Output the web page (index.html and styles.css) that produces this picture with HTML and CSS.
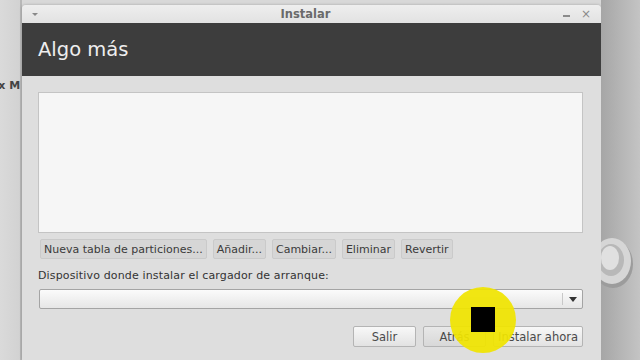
FILE: index.html
```html
<!DOCTYPE html>
<html lang="es">
<head>
<meta charset="utf-8">
<link rel="stylesheet" href="styles.css">
</head>
<body>
<div class="desktop">
  <div class="side-left"><span class="side-text">x Mi</span></div>
  <div class="window">
    <div class="titlebar">
      <span class="menu-arrow"></span>
      <span class="title">Instalar</span>
      <span class="win-btns"><span class="minimize"></span><span class="close">×</span></span>
    </div>
    <div class="header">Algo más</div>
    <div class="content">
      <div class="partitions"></div>
      <div class="part-buttons">
        <button class="btn">Nueva tabla de particiones...</button>
        <button class="btn">Añadir...</button>
        <button class="btn">Cambiar...</button>
        <button class="btn">Eliminar</button>
        <button class="btn">Revertir</button>
      </div>
      <div class="label">Dispositivo donde instalar el cargador de arranque:</div>
      <div class="combo"><span class="combo-field"></span><span class="combo-arrow"></span></div>
      <div class="actions">
        <button class="btn big">Salir</button>
        <button class="btn big back">Atrás</button>
        <button class="btn big install">Instalar ahora</button>
      </div>
    </div>
  </div>
  <div class="side-right">
    <svg class="disc" width="39" height="62" viewBox="0 0 39 62">
      <ellipse cx="12" cy="34" rx="20" ry="24" fill="#9c9c9c"/>
      <ellipse cx="11" cy="31" rx="19" ry="23" fill="#d6d6d6"/>
      <ellipse cx="10" cy="30" rx="13" ry="16" fill="#b8b8b8"/>
      <ellipse cx="9" cy="28" rx="9" ry="12" fill="#e0e0e0"/>
    </svg>
  </div>
  <div class="cursor-hl"><span class="cursor-box"></span></div>
</div>
</body>
</html>
```
FILE: styles.css
```css
* { box-sizing: border-box; }
html, body { margin: 0; padding: 0; }
body {
  width: 640px;
  height: 360px;
  overflow: hidden;
  font-family: "DejaVu Sans", "Liberation Sans", sans-serif;
}
.desktop {
  position: relative;
  display: flex;
  width: 640px;
  height: 360px;
  background: #d8d8d8;
}
.side-left {
  width: 22px;
  flex: none;
  background: linear-gradient(to right, #dadada, #d2d2d2);
  border-right: 2px solid #b8b8b8;
  overflow: hidden;
  padding-top: 79px;
  display: flex;
  justify-content: flex-end;
}
.side-text {
  font-size: 11px;
  font-weight: bold;
  color: #444;
  white-space: nowrap;
  margin-right: -4px;
}
.window {
  width: 579px;
  flex: none;
  margin-top: 5px;
  background: #dedede;
  border-radius: 4px 4px 0 0;
  box-shadow: 0 0 3px rgba(0,0,0,0.25);
  display: flex;
  flex-direction: column;
  overflow: hidden;
}
.titlebar {
  height: 18px;
  flex: none;
  background: linear-gradient(#eeeeee, #e2e2e2);
  display: flex;
  align-items: center;
  padding: 0 10px 0 10px;
}
.menu-arrow {
  width: 0; height: 0;
  border-left: 3px solid transparent;
  border-right: 3px solid transparent;
  border-top: 3px solid #888;
}
.title {
  flex: 1;
  text-align: center;
  font-size: 11.5px;
  font-weight: bold;
  color: #6a6a6a;
  margin-left: 10px;
}
.win-btns { display: flex; align-items: center; gap: 11px; }
.minimize { width: 7px; height: 2px; background: #8a8a8a; margin-top: 3px; }
.close { font-size: 12px; color: #8a8a8a; line-height: 1; }
.header {
  height: 53px;
  flex: none;
  background: #3d3d3d;
  color: #eeeeee;
  font-size: 19.5px;
  padding: 15px 0 0 16px;
}
.content {
  flex: 1;
  padding: 16px 18px 0 16px;
  display: flex;
  flex-direction: column;
}
.partitions {
  height: 141px;
  background: #f6f6f6;
  border: 1px solid #c4c4c4;
}
.part-buttons {
  display: flex;
  gap: 6px;
  margin-top: 6px;
  padding-left: 2px;
}
.btn {
  font-family: "DejaVu Sans", "Liberation Sans", sans-serif;
  font-size: 11px;
  color: #3a3a3a;
  height: 20px;
  padding: 0 3px;
  background: #d6d6d6;
  border: 1px solid #cacaca;
  border-radius: 2px;
  margin: 0;
}
.label {
  font-size: 11px;
  letter-spacing: 0.15px;
  color: #333;
  margin-top: 10px;
}
.combo {
  margin-top: 7px;
  margin-left: 1px;
  height: 20px;
  display: flex;
  border: 1px solid #a4a4a4;
  border-radius: 2px;
  background: linear-gradient(#fbfbfb, #e6e6e6);
}
.combo-field { flex: 1; border-right: 1px solid #c8c8c8; margin: 3px 0; }
.combo-arrow {
  width: 19px;
  display: flex;
  align-items: center;
  justify-content: center;
}
.combo-arrow::after {
  content: "";
  border-left: 4px solid transparent;
  border-right: 4px solid transparent;
  border-top: 5px solid #333;
}
.actions {
  display: flex;
  justify-content: flex-end;
  gap: 7px;
  margin-top: 17px;
}
.btn.big {
  height: 21px;
  font-size: 11.5px;
  color: #4a4a4a;
  background: linear-gradient(#f8f8f8, #e2e2e2);
  border: 1px solid #b4b4b4;
}
.btn.big:first-child { width: 63px; }
.btn.back { width: 63px; background: linear-gradient(#e8e8e8, #d8d8d8); }
.btn.install { width: 90px; }
.side-right {
  flex: 1;
  background: linear-gradient(to right, #a6a6a6, #c4c4c4);
  padding-top: 230px;
}
.disc { display: block; }
.cursor-hl {
  position: absolute;
  left: 450px;
  top: 287px;
  width: 66px;
  height: 66px;
  border-radius: 50%;
  background: rgba(240, 228, 0, 0.93);
  display: flex;
  align-items: center;
  justify-content: center;
}
.cursor-box {
  width: 24px;
  height: 25px;
  background: #000;
  margin-top: -2px;
}
```
